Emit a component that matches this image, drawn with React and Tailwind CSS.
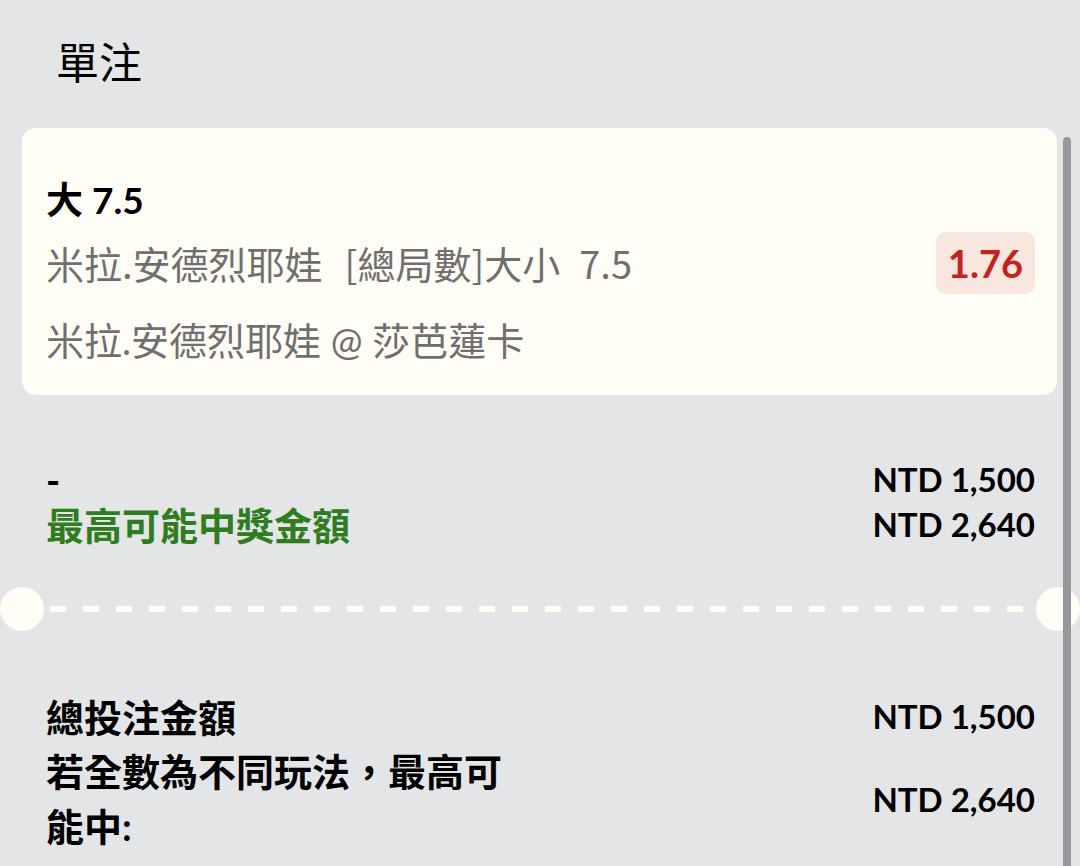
export default function App() {
  const font = { fontFamily: 'Lato, "Noto Sans CJK TC", sans-serif' };
  return (
    <div
      className="relative w-[1080px] h-[866px] overflow-hidden bg-[#e4e5e7] text-black"
      style={font}
    >
      <div className="h-[128px] flex items-center pl-[56px] pb-[3px]">
        <h1 className="text-[43px] font-normal leading-none">單注</h1>
      </div>

      <div className="ml-[22px] mr-[23px] rounded-[14px] bg-[#fffdf5] pl-[24px] pr-[22px] pt-[46px] pb-[29px]">
        <div className="h-[52px] leading-[52px] text-[37px] font-bold">大 7.5</div>
        <div className="mt-[6px] h-[62px] flex items-center justify-between">
          <span className="text-[38px] text-[#6f6f6f] leading-none font-['Noto_Sans_CJK_TC',sans-serif]">
            <span>米拉.安德烈耶娃</span>
            <span className="ml-[22px]">[總局數]大小</span>
            <span className="ml-[19px]">7.5</span>
          </span>
          <span className="h-[62px] flex items-center rounded-[10px] bg-[#f8e6df] px-[12px] text-[38px] font-bold text-[#c3221d] leading-none">
            1.76
          </span>
        </div>
        <div className="mt-[20px] h-[52px] leading-[52px] text-[38px] text-[#6f6f6f]">
          米拉.安德烈耶娃 @ 莎芭蓮卡
        </div>
      </div>

      <div className="mt-[62px] pl-[46px] pr-[45px]">
        <div className="flex justify-between items-center h-[45px]">
          <span className="text-[38px] font-bold leading-none">-</span>
          <span className="text-[33px] font-bold leading-none">NTD 1,500</span>
        </div>
        <div className="flex justify-between items-center h-[45px]">
          <span className="text-[38px] font-bold leading-none text-[#2f7d20]">最高可能中獎金額</span>
          <span className="text-[33px] font-bold leading-none">NTD 2,640</span>
        </div>
      </div>

      <div className="mt-[40px] flex items-center h-[44px]">
        <div className="w-[44px] h-[44px] rounded-full bg-[#fffdf5] shrink-0" />
        <div className="flex-1 mx-[6px] h-[6px] bg-[repeating-linear-gradient(90deg,#fffdf5_0px,#fffdf5_16px,transparent_16px,transparent_33px)]" />
        <div className="w-[44px] h-[44px] rounded-full bg-[#fffdf5] shrink-0" />
      </div>

      <div className="mt-[58px] pl-[46px] pr-[45px]">
        <div className="flex justify-between items-center h-[55px]">
          <span className="text-[38px] font-bold leading-none">總投注金額</span>
          <span className="text-[33px] font-bold leading-none">NTD 1,500</span>
        </div>
        <div className="flex justify-between items-center">
          <span className="w-[470px] text-[38px] font-bold leading-[55px]">若全數為不同玩法，最高可能中:</span>
          <span className="text-[33px] font-bold leading-none">NTD 2,640</span>
        </div>
      </div>

      <div className="absolute left-[1063px] top-[137px] w-[8px] bottom-0 rounded-t-full bg-[#97979b]" />
    </div>
  );
}
